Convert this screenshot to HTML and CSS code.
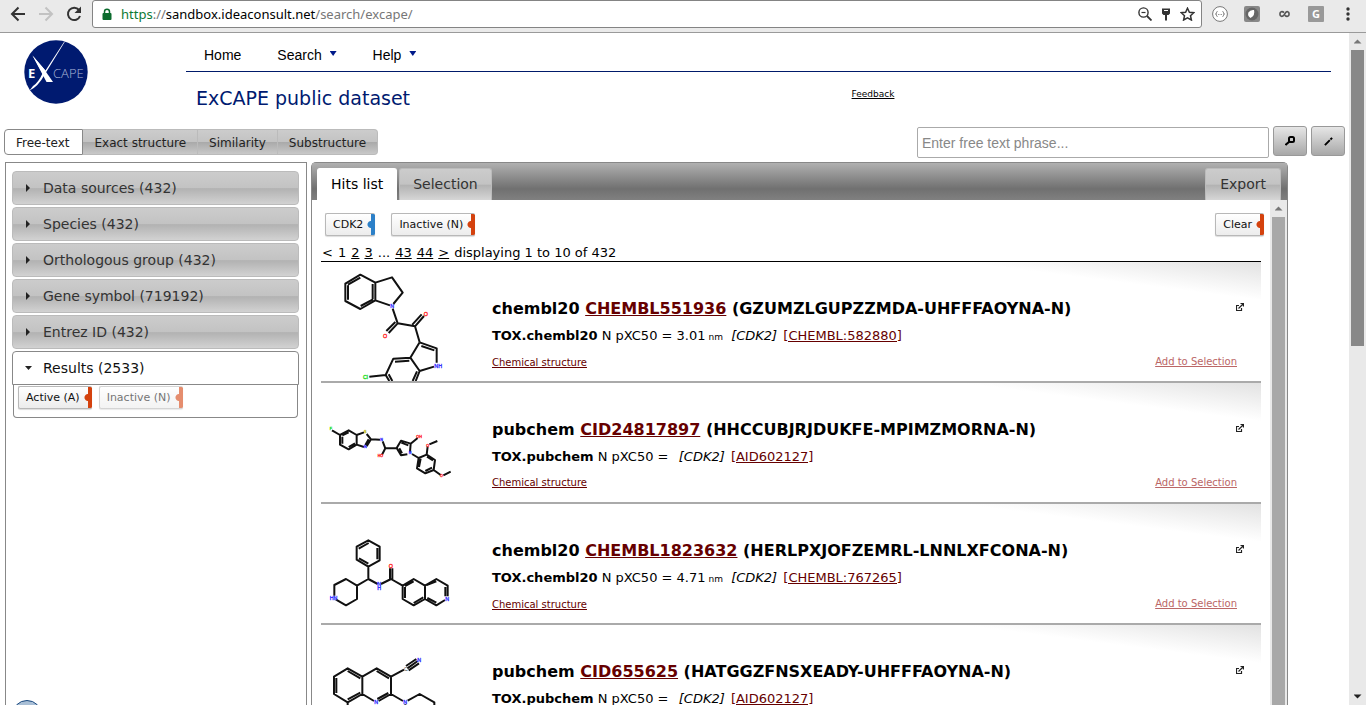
FILE: index.html
```html
<!DOCTYPE html>
<html lang="en">
<head>
<meta charset="utf-8">
<title>ExCAPE public dataset</title>
<link rel="stylesheet" href="styles.css">
</head>
<body>
<div class="browser-bar">
  <button class="bar-btn" aria-label="Back"><svg width="16" height="16" viewBox="0 0 16 16" fill="none" stroke="#333" stroke-width="2"><path d="M15 8H2.500M8.500 1.500L2 8l6.500 6.500"/></svg></button>
  <button class="bar-btn" aria-label="Forward"><svg width="16" height="16" viewBox="0 0 16 16" fill="none" stroke="#c2c2c2" stroke-width="2"><path d="M1 8h12.500M7.500 1.500L14 8l-6.500 6.500"/></svg></button>
  <button class="bar-btn" aria-label="Reload"><svg width="16" height="16" viewBox="0 0 16 16"><path d="M13 4A6.200 6.200 0 1 0 14 10" fill="none" stroke="#333" stroke-width="2"/><path d="M15 0.500v6.500H8.500z" fill="#333"/></svg></button>
  <div class="address">
    <svg width="10" height="13" viewBox="0 0 10 13"><rect x="0.500" y="5" width="9" height="7" rx="1" fill="#0b6b2d"/><path d="M2.500 6V3.800a2.500 2.500 0 0 1 5 0V6" fill="none" stroke="#0b6b2d" stroke-width="1.500"/></svg>
    <div class="url"><span class="url-scheme">https</span><span class="url-dim">://</span>sandbox.ideaconsult.net<span class="url-dim">/search/excape/</span></div>
    <button class="bar-icon" aria-label="Zoom"><svg width="14" height="14" viewBox="0 0 14 14" fill="none" stroke="#333"><circle cx="5.500" cy="5.500" r="4.600" stroke-width="1.400"/><path d="M3.500 5.500h4" stroke-width="1.200"/><path d="M9 9l4.500 4.500" stroke-width="1.800"/></svg></button>
    <button class="bar-icon" aria-label="Saved passwords"><svg width="10" height="13" viewBox="0 0 10 13"><path d="M1 0.500h8v5L7.500 7H6v5.500H4V7H2.500L1 5.500z" fill="#333"/><path d="M3 2.500h4" stroke="#fff"/></svg></button>
    <button class="bar-icon" aria-label="Bookmark"><svg width="15" height="14" viewBox="0 0 15 14"><path d="M7.500 1.200l1.900 4 4.400.5-3.300 3 .9 4.300-3.900-2.200L3.600 13l.9-4.300-3.300-3 4.400-.5z" fill="none" stroke="#333" stroke-width="1.500"/></svg></button>
  </div>
  <div class="extensions">
    <button aria-label="JSON viewer"><svg width="16" height="16" viewBox="0 0 16 16"><circle cx="8" cy="8" r="7.400" fill="#fff" stroke="#777"/><path d="M5.500 5.500q-1 0-1 1.200 0 1.300-1 1.300 1 0 1 1.300 0 1.200 1 1.200M10.500 5.500q1 0 1 1.200 0 1.300 1 1.300-1 0-1 1.300 0 1.200-1 1.200" fill="none" stroke="#777"/><path d="M6 8.500h1M7.500 8.500h1M9 8.500h1" stroke="#999"/></svg></button>
    <button aria-label="Leaf"><svg width="16" height="16" viewBox="0 0 16 16"><rect width="16" height="16" rx="2" fill="#888"/><circle cx="8" cy="8" r="6.500" fill="#666"/><path d="M10 4q1.500 5-3.500 8Q3 9.500 4.500 6.500 6 3.500 10 4z" fill="#fff"/></svg></button>
    <button aria-label="Links"><svg width="11" height="8" viewBox="0 0 12 8" fill="none" stroke="#555" stroke-width="1.800"><path d="M5.500 2.500Q4 1 2.500 1.500 1 2 1 4t1.500 2.500T5.500 5L7 2.800Q8 1 9.500 1.500T11 4 9.500 6.500 6.500 5.500"/></svg></button>
    <button aria-label="G extension"><span class="g-badge">G</span></button>
    <button aria-label="Menu"><svg width="4" height="14" viewBox="0 0 4 14" fill="#333"><circle cx="2" cy="2" r="1.700"/><circle cx="2" cy="7" r="1.700"/><circle cx="2" cy="12" r="1.700"/></svg></button>
  </div>
</div>

<div class="viewport">
  <div class="page">
    <header class="site-header">
      <svg class="logo" width="64" height="64" viewBox="0 0 64 64" role="img" aria-label="ExCAPE"><circle cx="32" cy="32" r="31.700" fill="#001a70"/><path d="M41 1.500L21 34Q14 47 5.500 50.500L9 46Q14 43 18.500 33.500L8.500 15.500 21.500 30.500 40 2z" fill="#fff"/><path d="M8.500 15.500L22.500 42h6.500L20 29z" fill="#fff"/><text x="4" y="38" class="logo-bold">E</text><text x="29" y="38" class="logo-thin">CAPE</text></svg>
      <div class="header-main">
        <nav class="menu">
          <a href="#">Home</a>
          <a href="#">Search <span class="caret"></span></a>
          <a href="#">Help <span class="caret"></span></a>
        </nav>
        <div class="title-row">
          <h1>ExCAPE public dataset</h1>
          <a class="feedback" href="#">Feedback</a>
        </div>
      </div>
    </header>

    <div class="tool-row">
      <div class="modes">
        <button class="mode active">Free-text</button><button class="mode">Exact structure</button><button class="mode">Similarity</button><button class="mode">Substructure</button>
      </div>
      <form class="search">
        <input type="text" placeholder="Enter free text phrase..." aria-label="Free text phrase">
        <button type="button" aria-label="Search"><svg width="10" height="10" viewBox="0 0 10 10" fill="none" stroke="#000" stroke-width="2"><rect x="4" y="1" width="5" height="5" rx="1.500"/><path d="M4.500 5.500L0.500 9" /></svg></button>
        <button type="button" aria-label="Draw"><svg width="9" height="9" viewBox="0 0 10 10" stroke="#000" stroke-width="2.200"><path d="M1 9l5.500-5.500M7.200 2.800L9 1"/></svg></button>
      </form>
    </div>

    <div class="columns">
      <aside class="facets">
        <button class="facet"><span class="arrow"></span>Data sources (432)</button>
        <button class="facet"><span class="arrow"></span>Species (432)</button>
        <button class="facet"><span class="arrow"></span>Orthologous group (432)</button>
        <button class="facet"><span class="arrow"></span>Gene symbol (719192)</button>
        <button class="facet"><span class="arrow"></span>Entrez ID (432)</button>
        <div class="facet-open">
          <button class="facet open"><span class="arrow down"></span>Results (2533)</button>
          <div class="facet-body">
            <button class="tag">Active (A)</button>
            <button class="tag faded">Inactive (N)</button>
          </div>
        </div>
      </aside>

      <section class="results">
        <div class="tabs">
          <button class="tab active">Hits list</button>
          <button class="tab">Selection</button>
          <button class="tab export">Export</button>
        </div>
        <div class="results-body">
          <div class="hits">
            <div class="filters">
              <button class="tag blue">CDK2</button>
              <button class="tag">Inactive (N)</button>
              <button class="tag clear">Clear</button>
            </div>
            <div class="pager"><span>&lt;</span><span>1</span><a href="#">2</a><a href="#">3</a><span>...</span><a href="#">43</a><a href="#">44</a><a href="#">&gt;</a><span>displaying 1 to 10 of 432</span></div>

            <article class="hit">
              <svg class="mol" viewBox="3 0 510 357">
                <path class="bond" d="M76 65L121 38 166 62V115L121 141 76 117ZM166 62L216 46 248 92 220 126M166 115L210 130M218 140L233 184 285 193 299 241M233 184L206 213M226 180L199 207M285 193L312 162M277 188L305 157M299 241L350 259V302M299 241L271 287 299 327 342 314M304 252L343 265M271 287L220 290 197 339 208 357M197 339L148 344M268 296L225 299M299 327L287 357M291 328L278 357M206 337L217 357M84 68L121 47M84 113V70M122 132L159 112M158 66V112"/>
                <text class="n" x="211" y="138">N</text><text class="o" x="311" y="161">O</text><text class="o" x="189" y="228">O</text><text class="n" x="343" y="317">NH</text><text class="cl" x="129" y="351">Cl</text>
              </svg>
              <div class="hit-text">
                <h2>chembl20 <a href="#">CHEMBL551936</a> (GZUMZLGUPZZMDA-UHFFFAOYNA-N)</h2>
                <p class="tox"><b>TOX.chembl20</b> N pXC50 = 3.01<small>nm</small> <i>[CDK2]</i> <a href="#">[CHEMBL:582880]</a></p>
                <a class="structure" href="#">Chemical structure</a>
              </div>
              <div class="hit-side"><a class="ext" href="#" aria-label="Open"><svg width="8" height="8" viewBox="0 0 8 8" fill="none" stroke="#222"><path d="M3 2.500H.5v5h5V5M2.500 5.500L7 1M4.500.5h3v3" stroke-width="1.200"/></svg></a><a class="add" href="#">Add to Selection</a></div>
            </article>

            <article class="hit">
              <svg class="mol" viewBox="3 -6 510 357">
                <path class="bond heavy" d="M36 136L60 150 86 136 110 150V179L86 193 60 179V150M110 150L132 142M140 147L153 163 140 184M132 186L110 179M153 163L180 164M188 169L196 190 186 209M196 190L230 189 243 167 272 176 270 201M262 208L243 211 230 189M272 176L293 159M276 207L296 219 320 209 345 225 341 255 316 265 291 250 296 219M320 209L323 184M328 178L352 168M341 255L362 270M370 271L392 260M67 151L86 142M67 155V176M86 186L105 175M146 163L136 180M238 190L246 205M244 173L265 181M302 221L297 246M316 258L336 248M321 215L339 226"/>
                <text class="f tiny" x="29" y="136">F</text><text class="s tiny" x="132" y="144">S</text><text class="n tiny" x="132" y="190">N</text><text class="n tiny" x="181" y="168">N</text><text class="o tiny" x="173" y="217">HO</text><text class="o tiny" x="289" y="160">OH</text><text class="n tiny" x="266" y="207">N</text><text class="o tiny" x="319" y="185">O</text><text class="o tiny" x="360" y="275">O</text>
              </svg>
              <div class="hit-text">
                <h2>pubchem <a href="#">CID24817897</a> (HHCCUBJRJDUKFE-MPIMZMORNA-N)</h2>
                <p class="tox"><b>TOX.pubchem</b> N pXC50 = &nbsp;<i>[CDK2]</i> <a href="#">[AID602127]</a></p>
                <a class="structure" href="#">Chemical structure</a>
              </div>
              <div class="hit-side"><a class="ext" href="#" aria-label="Open"><svg width="8" height="8" viewBox="0 0 8 8" fill="none" stroke="#222"><path d="M3 2.500H.5v5h5V5M2.500 5.500L7 1M4.500.5h3v3" stroke-width="1.200"/></svg></a><a class="add" href="#">Add to Selection</a></div>
            </article>

            <article class="hit">
              <svg class="mol" viewBox="3 -3 510 357">
                <path class="bond" d="M145 106L179 125V166L145 185 110 164V125ZM145 185V222L111 242V282L78 301 47 283M43 272V240L78 222 111 242M145 222L173 237M183 237L213 222 248 242 281 222 315 242 349 222 383 242V274M375 285L349 301 315 282V242M315 282L281 301 248 282V242M210 222V190M217 222V190M146 114L116 131M117 160L145 176M172 129V163M255 246V279M255 243L281 229M281 294L310 277M320 240L349 229M349 293L322 279M376 246V274"/>
                <text class="o" x="206" y="188">O</text><text class="n" x="172" y="244">N</text><text class="n" x="172" y="256">H</text><text class="n" x="29" y="286">HN</text><text class="n" x="376" y="287">N</text>
              </svg>
              <div class="hit-text">
                <h2>chembl20 <a href="#">CHEMBL1823632</a> (HERLPXJOFZEMRL-LNNLXFCONA-N)</h2>
                <p class="tox"><b>TOX.chembl20</b> N pXC50 = 4.71<small>nm</small> <i>[CDK2]</i> <a href="#">[CHEMBL:767265]</a></p>
                <a class="structure" href="#">Chemical structure</a>
              </div>
              <div class="hit-side"><a class="ext" href="#" aria-label="Open"><svg width="8" height="8" viewBox="0 0 8 8" fill="none" stroke="#222"><path d="M3 2.500H.5v5h5V5M2.500 5.500L7 1M4.500.5h3v3" stroke-width="1.200"/></svg></a><a class="add" href="#">Add to Selection</a></div>
            </article>

            <article class="hit">
              <svg class="mol" viewBox="3 0 510 357">
                <path class="bond" d="M42 155L83 130 127 155V207L83 232 42 207ZM127 155L170 130 213 155V207L176 228M162 228L127 207M213 155L252 134M262 130L293 108M258 123L289 102M266 136L297 115M213 207L249 228M263 227L299 207 343 232V260M83 232V260M256 238V260M49 159V204M83 138L121 160M83 223L121 203M170 138L207 160M205 204L172 222"/>
                <text class="c" x="252" y="137">C</text><text class="n" x="292" y="112">N</text><text class="n" x="163" y="238">N</text><text class="n" x="250" y="238">N</text>
              </svg>
              <div class="hit-text">
                <h2>pubchem <a href="#">CID655625</a> (HATGGZFNSXEADY-UHFFFAOYNA-N)</h2>
                <p class="tox"><b>TOX.pubchem</b> N pXC50 = &nbsp;<i>[CDK2]</i> <a href="#">[AID602127]</a></p>
              </div>
              <div class="hit-side"><a class="ext" href="#" aria-label="Open"><svg width="8" height="8" viewBox="0 0 8 8" fill="none" stroke="#222"><path d="M3 2.500H.5v5h5V5M2.500 5.500L7 1M4.500.5h3v3" stroke-width="1.200"/></svg></a></div>
            </article>
          </div>
          <div class="scroll inner"><span class="scroll-up"></span><div class="thumb"></div></div>
        </div>
      </section>
    </div>
  </div>
  <div class="scroll outer"><span class="scroll-up"></span><div class="thumb"></div><span class="scroll-down"></span></div>
</div>
<div class="bubble"></div>
</body>
</html>
```
FILE: styles.css
```css
* { box-sizing: border-box; }
body {
  margin: 0;
  height: 100vh;
  display: flex;
  flex-direction: column;
  overflow: hidden;
  background: #fff;
  color: #000;
  font-family: "DejaVu Sans", sans-serif;
  font-size: 13px;
}
button { font-family: inherit; margin: 0; padding: 0; border: 0; background: none; color: inherit; }
h1, h2, p { margin: 0; }
svg { display: block; flex: none; }

/* Browser toolbar */
.browser-bar {
  flex: none;
  display: flex;
  align-items: flex-start;
  height: 33px;
  padding-left: 10px;
  background: #eaeaea;
  border-bottom: 1px solid #9a9a9a;
}
.bar-btn { width: 16px; margin-right: 12px; padding-top: 6px; }
.bar-btn:nth-child(3) { margin-right: 10px; }
.address {
  flex: 1;
  display: flex;
  align-items: center;
  gap: 9px;
  height: 28px;
  padding: 0 6px 0 9px;
  background: #fff;
  border: 1px solid #848484;
  border-radius: 3px;
}
.url { flex: 1; font: 13px/20px "Noto Sans", sans-serif; }
.url-scheme { color: #0b7a35; }
.url-dim { color: #777; }
.extensions {
  display: flex;
  align-items: center;
  height: 28px;
  padding: 0 2px;
}
.extensions button { display: flex; align-items: center; justify-content: center; width: 32px; height: 28px; }
.g-badge { width: 16px; height: 16px; background: #999; border-radius: 1px; color: #fff; font: bold 11px/16px "Open Sans", sans-serif; }

.viewport { flex: 1; display: flex; min-height: 0; }
.page { flex: 1; min-width: 0; display: flex; flex-direction: column; }

/* Scroll bars */
.scroll { flex: none; width: 17px; display: flex; flex-direction: column; align-items: center; background: #e9e9e9; }
.scroll-up { width: 8px; height: 17px; background: #777; clip-path: polygon(50% 38%, 100% 62%, 0 62%); }
.scroll-down { width: 8px; height: 17px; margin-top: auto; background: #222; clip-path: polygon(0 38%, 100% 38%, 50% 62%); }
.thumb { width: 13px; background: #888; }
.outer .thumb { flex: 0 0 44%; }
.inner .thumb { flex: 1; background: #a8a8a8; }

/* Header */
.site-header { display: flex; padding: 0 18px 0 24px; }
.logo { margin-top: 7px; }
.logo-bold { font: bold 13px "Open Sans", sans-serif; fill: #fff; }
.logo-thin { font: 300 13px "Open Sans", sans-serif; fill: #a9b4d6; }
.header-main { flex: 1; margin-left: 98px; }
.menu {
  display: flex;
  gap: 36px;
  height: 39px;
  padding: 12px 18px 0;
  border-bottom: 1px solid #001a6a;
  font: 14px/20px "Liberation Sans", sans-serif;
}
.menu a { color: #000; text-decoration: none; }
.caret { display: inline-block; width: 7px; height: 5px; margin: 0 0 4px 4px; background: #001a8a; clip-path: polygon(0 0, 100% 0, 50% 100%); }
.title-row { display: grid; grid-template-columns: 4fr 3fr; padding: 14px 0 0 10px; height: 54px; }
h1 { font-size: 19px; line-height: 24px; font-weight: normal; color: #001a70; }
.feedback { padding: 3px 7px; font-size: 9px; line-height: 10px; color: #000; }

/* Search modes and search box */
.tool-row { display: flex; justify-content: space-between; padding: 0 4px; height: 35px; }
.modes { display: flex; height: 26px; margin-top: 3px; }
.mode {
  padding: 1px 11px 0;
  border: 1px solid #bbb;
  border-left-width: 0;
  background: linear-gradient(#ccc, #c3c3c3 49%, #aaa 52%, #c8c8c8);
  font-size: 12px;
  color: #222;
}
.mode:last-child { border-radius: 0 4px 4px 0; }
.mode.active { padding-right: 13px; border: 1px solid #888; border-radius: 4px 0 0 4px; background: #fff; }
.search { display: flex; gap: 4px; }
.search input {
  width: 352px;
  height: 31px;
  margin-top: 1px;
  padding: 0 4px;
  border: 1px solid #aaa;
  border-radius: 2px;
  font: 14px "Liberation Sans", sans-serif;
}
.search input::placeholder { color: #888; }
.search button {
  display: flex;
  align-items: center;
  justify-content: center;
  width: 34px;
  height: 30px;
  border: 1px solid #999;
  border-radius: 3px;
  background: linear-gradient(#e6e6e6, #a8a8a8);
}

/* Facets */
.columns { flex: 1; display: flex; gap: 4px; min-height: 0; margin: 1px 61px 0 5px; overflow: hidden; }
.facets {
  flex: 0 0 302px;
  display: flex;
  flex-direction: column;
  gap: 2px;
  padding: 8px 7px 0 6px;
  border: 1px solid #888;
  border-bottom: 0;
}
.facet {
  display: flex;
  align-items: center;
  gap: 13px;
  width: 100%;
  height: 34px;
  padding-left: 13px;
  border: 1px solid #bbb;
  border-radius: 4px;
  background: linear-gradient(#ccc, #c3c3c3 49%, #b2b2b2 52%, #d2d2d2);
  font-size: 14px;
  color: #333;
}
.facet.open { padding-left: 12px; gap: 11px; background: #fff; border-color: #888; border-radius: 4px 4px 0 0; color: #111; }
.arrow { width: 4px; height: 8px; background: #222; clip-path: polygon(0 0, 100% 50%, 0 100%); }
.arrow.down { width: 7px; height: 4px; clip-path: polygon(0 0, 100% 0, 50% 100%); }
.facet-body {
  display: flex;
  gap: 7px;
  height: 33px;
  margin: 0 1px;
  padding: 1px 4px;
  border: 1px solid #888;
  border-top: 0;
  border-radius: 0 0 4px 4px;
}
.tag {
  --accent: #d4420e;
  height: 23px;
  padding: 0 12px 0 7px;
  border: 1px solid #b8b8b8;
  border-right: 0;
  border-radius: 2px;
  background:
    linear-gradient(var(--accent), var(--accent)) right / 4px 100% no-repeat border-box,
    radial-gradient(circle at calc(100% - 4px) 50%, var(--accent) 3px, transparent 4px),
    linear-gradient(#fff, #ececec);
  box-shadow: 0 1px 1px #ddd;
  font-size: 11px;
  line-height: 20px;
  color: #111;
}
.tag.blue { --accent: #2c80c8; }
.tag.faded { opacity: 0.6; }

/* Results */
.results { flex: 1; min-width: 0; display: flex; flex-direction: column; border: 1px solid #888; border-bottom: 0; border-radius: 5px 5px 0 0; }
.tabs {
  flex: none;
  display: flex;
  gap: 2px;
  height: 37px;
  padding: 5px 6px 0 5px;
  background: linear-gradient(#b0b0b0, #707070 70%, #808080);
}
.tab {
  padding: 0 14px 2px;
  border: 1px solid #bbb;
  border-bottom: 0;
  border-radius: 3px 3px 0 0;
  background: linear-gradient(#ccc, #c3c3c3 49%, #b2b2b2 52%, #d6d6d6);
  font-size: 14px;
  color: #333;
}
.tab.active { padding: 0 13px 2px; background: #fff; border-color: #fff; color: #000; }
.tab:nth-child(2) { padding: 0 13px 2px; }
.tab.export { margin-left: auto; }
.results-body { flex: 1; min-height: 0; display: flex; }
.hits { flex: 1; min-width: 0; padding: 13px 9px 0; overflow: hidden; }
.filters { display: flex; gap: 16px; padding-left: 4px; }
.tag.clear { margin: 0 -3px 0 auto; }
.pager { display: flex; gap: 5px; height: 26px; padding: 9px 1px 0; border-bottom: 1px solid #000; font-size: 13px; line-height: 16px; }
.pager a { color: #000; }
.hit {
  display: flex;
  height: 121px;
  border-bottom: 2px solid #aaa;
  background: linear-gradient(to bottom left, #e2e2e2, #fff 16%);
  overflow: hidden;
}
.mol { width: 170px; height: 119px; }
.bond { fill: none; stroke: #111; stroke-width: 6; stroke-linejoin: round; }
.mol text { font: 16px "Liberation Sans", sans-serif; }
.mol .tiny { font-size: 11px; }
.mol .n { fill: #33f; stroke: #33f; }
.mol .o { fill: #f22; stroke: #f22; }
.mol .cl, .mol .f { fill: #2d2; stroke: #2d2; }
.mol .s { fill: #bb2; stroke: #bb2; }
.mol .c { fill: #444; }
.hit-text { flex: 1; padding: 36px 0 0 1px; white-space: nowrap; }
.hit a { color: #600; }
h2 { font-size: 16px; line-height: 21px; }
.tox { margin: 7px 0 10px; font-size: 13px; line-height: 20px; }
.tox small { padding: 0 2px 0 3px; font-size: 9px; }
.tox i { padding: 0 2px; }
.structure, .hit .add { font-size: 10px; line-height: 12px; }
.structure { display: block; }
.hit-side { display: flex; flex-direction: column; justify-content: space-between; align-items: flex-end; padding: 41px 24px 13px 0; }
.ext { margin-right: -7px; }
.hit .add { color: #b66; }

.bubble { position: fixed; left: 12px; bottom: -25px; width: 30px; height: 30px; border: 1px solid #1b4a80; border-radius: 50%; background: #a9bfd6; }
```
